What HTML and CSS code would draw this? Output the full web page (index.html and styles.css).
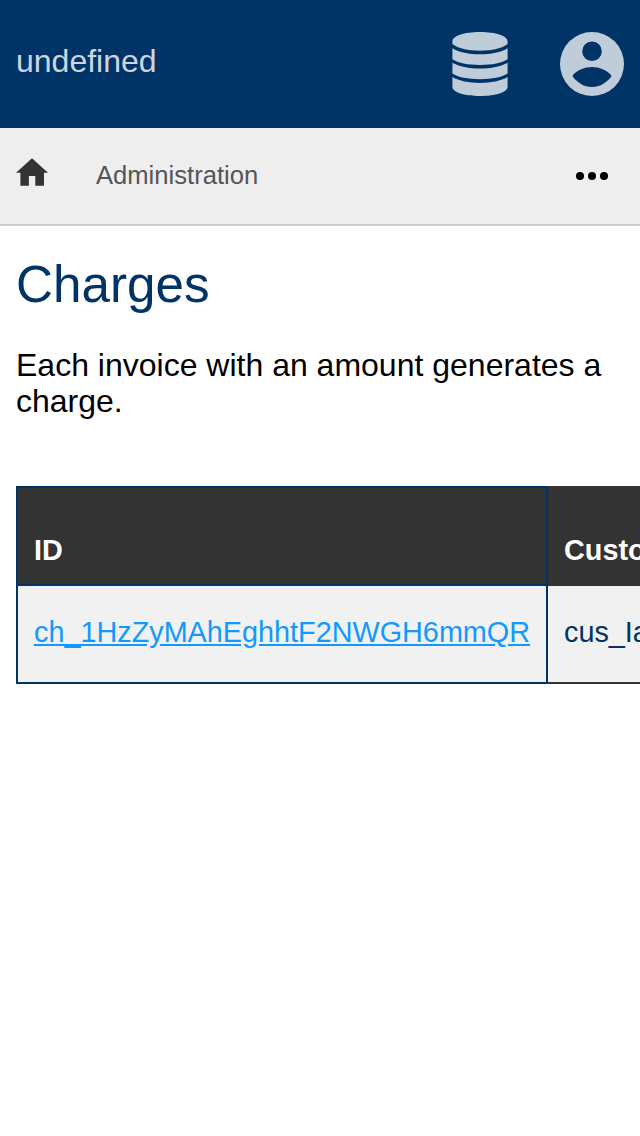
FILE: index.html
```
<!DOCTYPE html>
<html lang="en">
<head>
<meta charset="utf-8">
<title>Charges</title>
<link rel="stylesheet" href="styles.css">
</head>
<body>
<header class="topbar">
  <span class="brand">undefined</span>
  <nav class="actions">
    <svg class="icon-db" viewBox="0 0 56 64"><path d="M.4 9.500C.4 4 12 0 28 0s27.600 4 27.600 9.500V12C50 16.500 40 18.700 28 18.700S6 16.500 .4 12zM.4 16.300C7 20.300 17 22.300 28 22.300s21-2 27.600-6V27.300C50 31 40 33 28 33S6 31 .4 27.300zM.4 30.700C7 34.600 17 36.500 28 36.500s21-1.900 27.600-5.800V41.600C50 45.300 40 47.200 28 47.200S6 45.300 .4 41.600zM.4 45C7 49 17 50.900 28 50.900S49 49 55.600 45v9.700c0 5.300-11.600 9.300-27.600 9.300S.4 60 .4 54.700z"/></svg>
    <svg class="icon-user" viewBox="0 0 64 64"><path fill-rule="evenodd" d="M32 0a32 32 0 1 1 0 64a32 32 0 1 1 0-64zM32 9.400a9.800 9.800 0 1 0 0 19.600a9.800 9.800 0 1 0 0-19.600zM13 43C17 38 25 35 32 35S47 38 51 43Q51.600 44 51 45C46 51 40 55 32 55S18 51 13 45Q12.400 44 13 43z"/></svg>
  </nav>
</header>
<nav class="crumbs">
  <svg class="icon-home" viewBox="0 0 32 28"><path d="M16 .3L32 14.700h-4v13h-8.700V18h-6.400v9.700H4.400v-13H0z"/></svg>
  <span class="crumb">Administration</span>
  <svg class="icon-more" viewBox="0 0 32 8"><circle cx="4" cy="4" r="4"/><circle cx="16" cy="4" r="4"/><circle cx="28" cy="4" r="4"/></svg>
</nav>
<main class="content">
  <h1 class="title">Charges</h1>
  <p class="intro">Each invoice with an amount generates a charge.</p>
  <table class="charges">
    <thead><tr><th class="id-col">ID</th><th>Customer</th></tr></thead>
    <tbody><tr><td class="id-col"><a class="link" href="#">ch_1HzZyMAhEghhtF2NWGH6mmQR</a></td><td>cus_Ia</td></tr></tbody>
  </table>
</main>
</body>
</html>
```
FILE: styles.css
```
* { box-sizing: border-box; }
body { margin: 0; background: #fff; font-family: "Liberation Sans", Arial, sans-serif; overflow: hidden; height: 1136px; }
.topbar { height: 128px; background: #036; display: flex; justify-content: space-between; padding: 32px 16px; }
.brand { font-size: 32px; line-height: 58px; color: #ccd6e0; }
.actions { display: flex; gap: 52px; fill: #bfccd9; }
.icon-db { width: 56px; height: 64px; }
.icon-user { width: 64px; height: 64px; }
.crumbs { height: 98px; background: #eee; border-bottom: 2px solid #ccc; display: flex; align-items: center; padding: 0 32px 0 16px; }
.icon-home { width: 32px; height: 28px; fill: #333; margin-bottom: 8px; }
.crumb { margin: 0 0 2px 48px; font-size: 25.6px; line-height: 30px; color: #555; }
.icon-more { width: 32px; height: 8px; margin-left: auto; }
.content { padding: 30px 16px; }
.title { margin: 0; font-size: 51.2px; line-height: 58px; font-weight: 400; color: #036; }
.intro { margin: 33px 0 67px; font-size: 32px; line-height: 36px; }
.charges { width: 800px; table-layout: fixed; border-collapse: collapse; font-size: 28.8px; line-height: 34px; color: #036; }
.charges th { height: 98px; padding: 45px 16px 17px; background: #333; border: 2px solid #333; color: #fff; text-align: left; }
.charges td { height: 98px; padding: 0 16px 4px; background: #f1f1f1; border: 2px solid #333; }
.charges .id-col { width: 530px; border-color: #036; }
.charges .link { color: #1199ff; }
```
